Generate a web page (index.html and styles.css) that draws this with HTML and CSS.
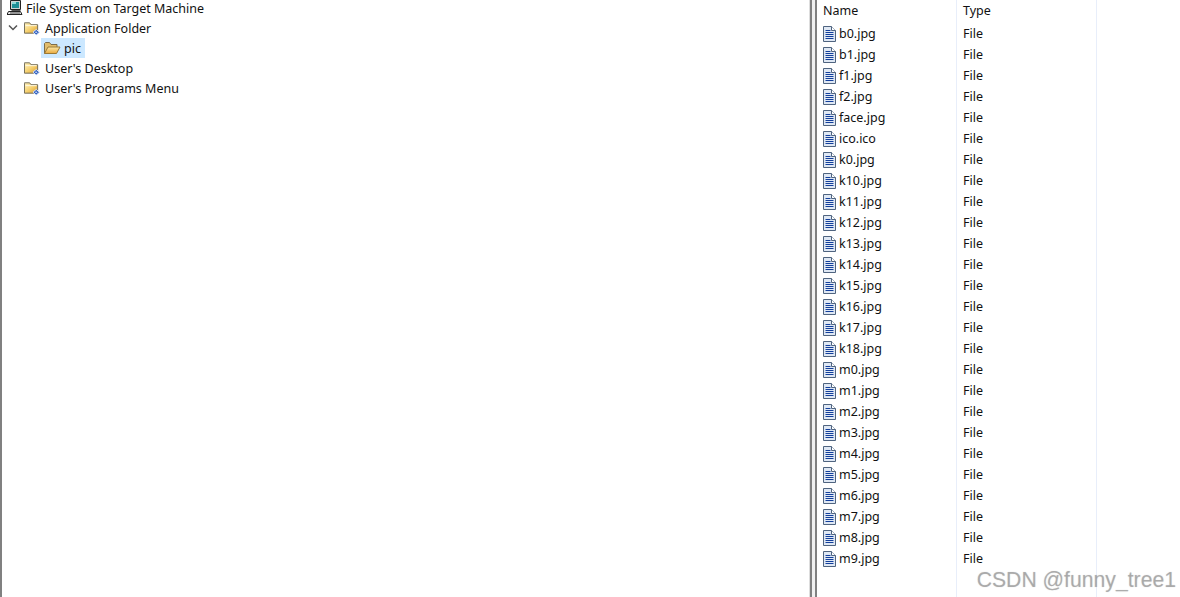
FILE: index.html
```html
<!DOCTYPE html>
<html>
<head>
  <meta charset="UTF-8">
  <title>File System on Target Machine</title>
  <link rel="stylesheet" href="styles.css">
</head>
<body>
  <svg class="defs" width="0" height="0">
    <defs>
      <linearGradient id="g-folder" x1="0" y1="0" x2="1" y2="1">
        <stop offset="0" stop-color="#fff3c0"/>
        <stop offset="0.5" stop-color="#f6d272"/>
        <stop offset="1" stop-color="#dd9c2e"/>
      </linearGradient>
      <linearGradient id="g-open" x1="0" y1="0" x2="0" y2="1">
        <stop offset="0" stop-color="#fce9a8"/>
        <stop offset="1" stop-color="#e9a93e"/>
      </linearGradient>
    </defs>
    <symbol id="i-folder" viewBox="0 0 17 16">
      <path d="M.5 3.500v-1h5.500l1.500 2h7v9h-14z" fill="url(#g-folder)" stroke="#6b6552"/>
      <path d="M1.500 5.500h12" stroke="#fffbe6"/>
      <path d="M13 9.500l3.500 3-3.500 3-3.500-3z" fill="#2f5fc0" stroke="#dfe9f8"/>
      <path d="M12 12.500h2" stroke="#fff"/>
    </symbol>
    <symbol id="i-open" viewBox="0 0 18 16">
      <path d="M1.500 13.500v-10l1-1h4l1.500 2h6v3" fill="#e2bd6c" stroke="#7d6d4a"/>
      <path d="M1.500 13.500l3.500-6.500h12l-3.500 6.500z" fill="url(#g-open)" stroke="#9c7a35"/>
    </symbol>
    <symbol id="i-file" viewBox="0 0 13 16">
      <path d="M.5 .5h8l4 4v11h-12z" fill="#dfe8f4" stroke="#4f6480"/>
      <path d="M8.500 .5v4h4" fill="#fff" stroke="#4f6480"/>
      <path d="M2.500 4.500h5M2.500 6.500h8M2.500 8.500h8M2.500 10.500h8M2.500 12.500h8" stroke="#123f9c"/>
    </symbol>
    <symbol id="i-pc" viewBox="0 0 16 16">
      <path d="M3.500 .5h10v9h-10z" fill="#cfd3d3" stroke="#222"/>
      <path d="M5 2h7v6h-7z" fill="#1f8f96"/>
      <path d="M5 2h4v2h-4z" fill="#8fd8d8"/>
      <path d="M4.500 10.500h9" stroke="#555"/>
      <path d="M1.500 11.500h12l1.500 3h-15z" fill="#e4e4e4" stroke="#222"/>
      <path d="M3 13h10" stroke="#444"/>
    </symbol>
  </svg>

  <div class="window">
    <div class="tree-pane">
      <div class="tree-row root-row">
        <svg class="icon"><use href="#i-pc"/></svg>
        <span>File System on Target Machine</span>
      </div>
      <div class="tree-row indent-1">
        <svg class="chevron" viewBox="0 0 10 8"><path d="M1 1.500l4 4 4-4" fill="none" stroke="#555" stroke-width="1.500"/></svg>
        <svg class="icon"><use href="#i-folder"/></svg>
        <span>Application Folder</span>
      </div>
      <div class="tree-row indent-2">
        <div class="selected">
          <svg class="icon-open"><use href="#i-open"/></svg>
          <span>pic</span>
        </div>
      </div>
      <div class="tree-row indent-1 no-chevron">
        <svg class="icon"><use href="#i-folder"/></svg>
        <span>User's Desktop</span>
      </div>
      <div class="tree-row indent-1 no-chevron">
        <svg class="icon"><use href="#i-folder"/></svg>
        <span>User's Programs Menu</span>
      </div>
    </div>

    <div class="splitter"></div>

    <div class="list-pane">
      <div class="list-cols">
        <div class="col col-name"></div>
        <div class="col col-type"></div>
      </div>
      <div class="list-head">
        <div class="cell-name">Name</div>
        <div class="cell-type">Type</div>
      </div>
      <div class="file-row"><div class="cell-name"><svg class="icon-file"><use href="#i-file"/></svg>b0.jpg</div><div class="cell-type">File</div></div>
      <div class="file-row"><div class="cell-name"><svg class="icon-file"><use href="#i-file"/></svg>b1.jpg</div><div class="cell-type">File</div></div>
      <div class="file-row"><div class="cell-name"><svg class="icon-file"><use href="#i-file"/></svg>f1.jpg</div><div class="cell-type">File</div></div>
      <div class="file-row"><div class="cell-name"><svg class="icon-file"><use href="#i-file"/></svg>f2.jpg</div><div class="cell-type">File</div></div>
      <div class="file-row"><div class="cell-name"><svg class="icon-file"><use href="#i-file"/></svg>face.jpg</div><div class="cell-type">File</div></div>
      <div class="file-row"><div class="cell-name"><svg class="icon-file"><use href="#i-file"/></svg>ico.ico</div><div class="cell-type">File</div></div>
      <div class="file-row"><div class="cell-name"><svg class="icon-file"><use href="#i-file"/></svg>k0.jpg</div><div class="cell-type">File</div></div>
      <div class="file-row"><div class="cell-name"><svg class="icon-file"><use href="#i-file"/></svg>k10.jpg</div><div class="cell-type">File</div></div>
      <div class="file-row"><div class="cell-name"><svg class="icon-file"><use href="#i-file"/></svg>k11.jpg</div><div class="cell-type">File</div></div>
      <div class="file-row"><div class="cell-name"><svg class="icon-file"><use href="#i-file"/></svg>k12.jpg</div><div class="cell-type">File</div></div>
      <div class="file-row"><div class="cell-name"><svg class="icon-file"><use href="#i-file"/></svg>k13.jpg</div><div class="cell-type">File</div></div>
      <div class="file-row"><div class="cell-name"><svg class="icon-file"><use href="#i-file"/></svg>k14.jpg</div><div class="cell-type">File</div></div>
      <div class="file-row"><div class="cell-name"><svg class="icon-file"><use href="#i-file"/></svg>k15.jpg</div><div class="cell-type">File</div></div>
      <div class="file-row"><div class="cell-name"><svg class="icon-file"><use href="#i-file"/></svg>k16.jpg</div><div class="cell-type">File</div></div>
      <div class="file-row"><div class="cell-name"><svg class="icon-file"><use href="#i-file"/></svg>k17.jpg</div><div class="cell-type">File</div></div>
      <div class="file-row"><div class="cell-name"><svg class="icon-file"><use href="#i-file"/></svg>k18.jpg</div><div class="cell-type">File</div></div>
      <div class="file-row"><div class="cell-name"><svg class="icon-file"><use href="#i-file"/></svg>m0.jpg</div><div class="cell-type">File</div></div>
      <div class="file-row"><div class="cell-name"><svg class="icon-file"><use href="#i-file"/></svg>m1.jpg</div><div class="cell-type">File</div></div>
      <div class="file-row"><div class="cell-name"><svg class="icon-file"><use href="#i-file"/></svg>m2.jpg</div><div class="cell-type">File</div></div>
      <div class="file-row"><div class="cell-name"><svg class="icon-file"><use href="#i-file"/></svg>m3.jpg</div><div class="cell-type">File</div></div>
      <div class="file-row"><div class="cell-name"><svg class="icon-file"><use href="#i-file"/></svg>m4.jpg</div><div class="cell-type">File</div></div>
      <div class="file-row"><div class="cell-name"><svg class="icon-file"><use href="#i-file"/></svg>m5.jpg</div><div class="cell-type">File</div></div>
      <div class="file-row"><div class="cell-name"><svg class="icon-file"><use href="#i-file"/></svg>m6.jpg</div><div class="cell-type">File</div></div>
      <div class="file-row"><div class="cell-name"><svg class="icon-file"><use href="#i-file"/></svg>m7.jpg</div><div class="cell-type">File</div></div>
      <div class="file-row"><div class="cell-name"><svg class="icon-file"><use href="#i-file"/></svg>m8.jpg</div><div class="cell-type">File</div></div>
      <div class="file-row"><div class="cell-name"><svg class="icon-file"><use href="#i-file"/></svg>m9.jpg</div><div class="cell-type">File</div></div>
      <div class="watermark">CSDN @funny_tree1</div>
    </div>
  </div>
</body>
</html>
```

FILE: styles.css
```css
html,body{margin:0;height:100%;overflow:hidden;background:white;}
body{font-family:"Noto Sans",sans-serif;font-size:12.5px;color:#111;}

.defs{position:absolute;}

.window{display:flex;height:597px;}

.tree-pane{width:810px;border-left:2px solid #808080;border-right:1px solid #ddd;box-sizing:border-box;}
.tree-row{display:flex;align-items:center;height:20px;}
.root-row{height:18px;padding:0 0 2px 5px;gap:3px;box-sizing:border-box;}
.indent-1{padding-left:6px;}
.indent-1 .icon{margin:0 5px 0 6px;}
.no-chevron{padding-left:16px;}
.indent-2{padding-left:39px;}
.chevron{width:10px;height:8px;}
.icon{width:16px;height:16px;flex:none;}
.icon-open{width:18px;height:16px;flex:none;margin-right:3px;}
.selected{display:flex;align-items:center;height:20px;padding:0 4px 0 2px;background:#cce8ff;}

.splitter{width:7px;box-sizing:border-box;border-left:2px solid #808080;border-right:2px solid #808080;background:#f0f0f0;}

.list-pane{position:relative;flex:1;}
.list-cols{position:absolute;top:0;bottom:0;left:0;display:flex;}
.col{border-right:1px solid #e8eefa;}
.col-name{width:139px;}
.col-type{width:139px;}

.list-head{display:flex;height:23px;padding-bottom:2px;box-sizing:border-box;align-items:center;}
.file-row{display:flex;height:21px;align-items:center;position:relative;}
.cell-name{width:140px;padding-left:6px;box-sizing:border-box;display:flex;align-items:center;}
.cell-type{padding-left:6px;}
.icon-file{width:13px;height:16px;margin-right:3px;flex:none;}

.watermark{position:absolute;right:4px;bottom:5px;font-family:"Liberation Sans",sans-serif;font-size:21.2px;color:rgba(130,130,130,0.5);text-shadow:0 0 1px rgba(130,130,130,0.4);white-space:nowrap;}
```
